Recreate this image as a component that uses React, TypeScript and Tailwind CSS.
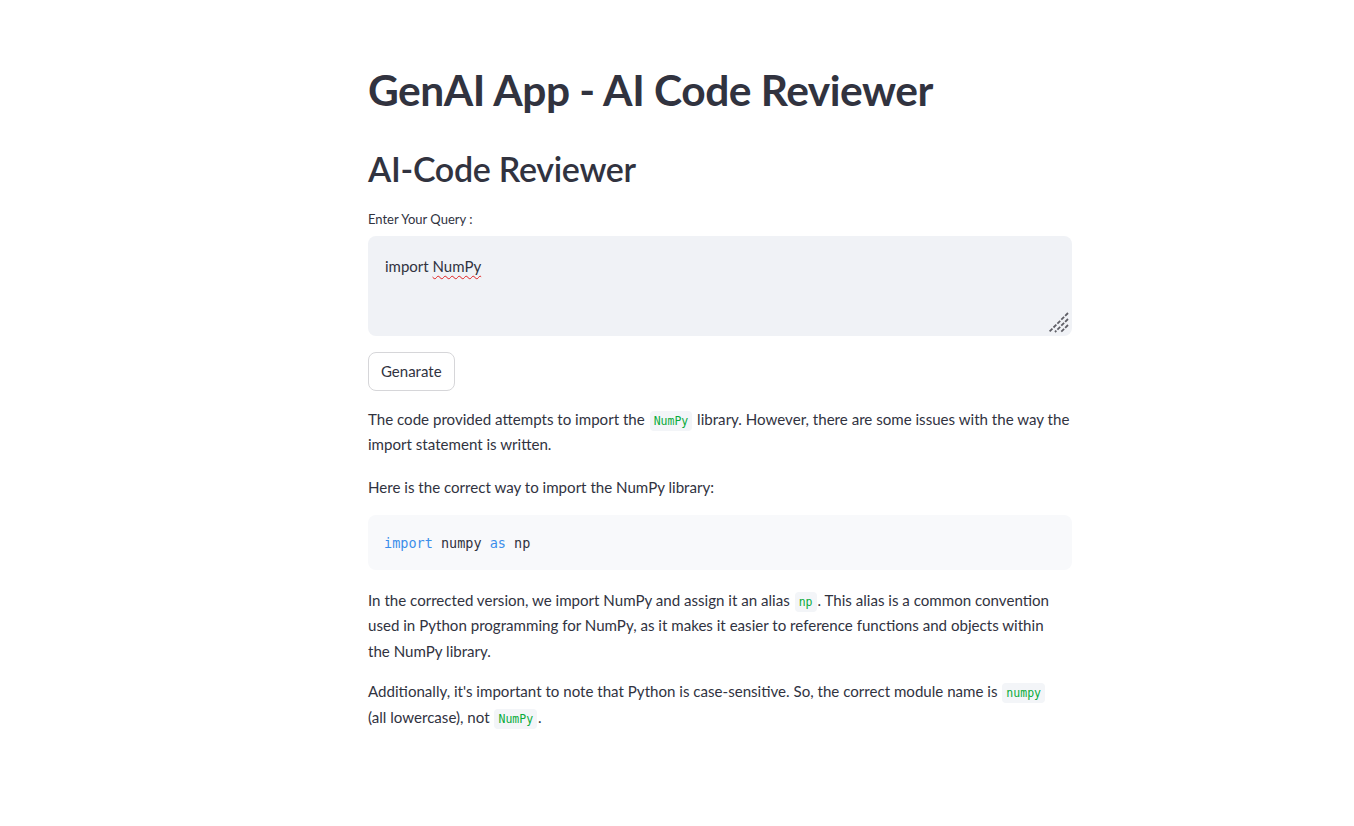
import React from "react";

const Code = ({ children }: { children: React.ReactNode }) => (
  <code className="mx-[1px] rounded-[4px] bg-[#f3f5f8] px-[4px] py-[3px] font-['DejaVu_Sans_Mono',monospace] text-[11.5px] leading-none text-[#09ab3b]">
    {children}
  </code>
);

export default function App() {
  return (
    <div className="min-h-[826px] bg-white font-['Lato','Noto_Sans',sans-serif] text-[#31333f]">
      <div className="ml-[368px] w-[704px] pt-[64px]">
        <h1 className="mb-[34px] text-[42.5px] font-bold leading-[1.2] tracking-[-0.5px]">GenAI App - AI Code Reviewer</h1>
        <h2 className="mb-[20px] text-[34px] font-semibold leading-[1.2] tracking-[-0.3px]">AI-Code Reviewer</h2>
        <div className="mb-[8px] text-[13px] leading-[18px]">Enter Your Query :</div>
        <div className="relative h-[100px] rounded-[8px] bg-[#f0f2f6] px-[17px] pt-[19px] text-[15px]">
          <span>import </span>
          <span className="underline decoration-[#e02020] decoration-wavy decoration-[1px] underline-offset-[3px]">NumPy</span>
          <svg className="absolute bottom-[3px] right-[3px]" width="22" height="22" viewBox="0 0 22 22">
            <path d="M21 2 L2 21 M21 8 L8 21 M21 14 L14 21" stroke="#5f5f66" strokeWidth="1.8" strokeDasharray="4 1.5" />
          </svg>
        </div>
        <button className="mt-[16px] h-[39px] rounded-[8px] border border-[#d6d6d9] bg-white px-[12px] text-[15px] leading-none">
          Genarate
        </button>
        <div className="mt-[16px] text-[15.1px] leading-[25.6px]">
          <p className="mb-[17px]">
            The code provided attempts to import the <Code>NumPy</Code> library. However, there are some issues with the way the import statement is written.
          </p>
          <p className="mb-[14px]">Here is the correct way to import the NumPy library:</p>
          <pre className="mb-[18px] rounded-[8px] bg-[#f8f9fb] px-[16px] pb-[16px] pt-[17px] font-['DejaVu_Sans_Mono',monospace] text-[13.5px] leading-[22px]">
            <span className="text-[#3b8eea]">import</span> numpy <span className="text-[#3b8eea]">as</span> np
          </pre>
          <p className="mb-[15px]">
            In the corrected version, we import NumPy and assign it an alias <Code>np</Code>. This alias is a common convention used in Python programming for NumPy, as it makes it easier to reference functions and objects within
            <br />
            the NumPy library.
          </p>
          <p>
            Additionally, it's important to note that Python is case-sensitive. So, the correct module name is <Code>numpy</Code>
            <br />
            (all lowercase), not <Code>NumPy</Code>.
          </p>
        </div>
      </div>
    </div>
  );
}
